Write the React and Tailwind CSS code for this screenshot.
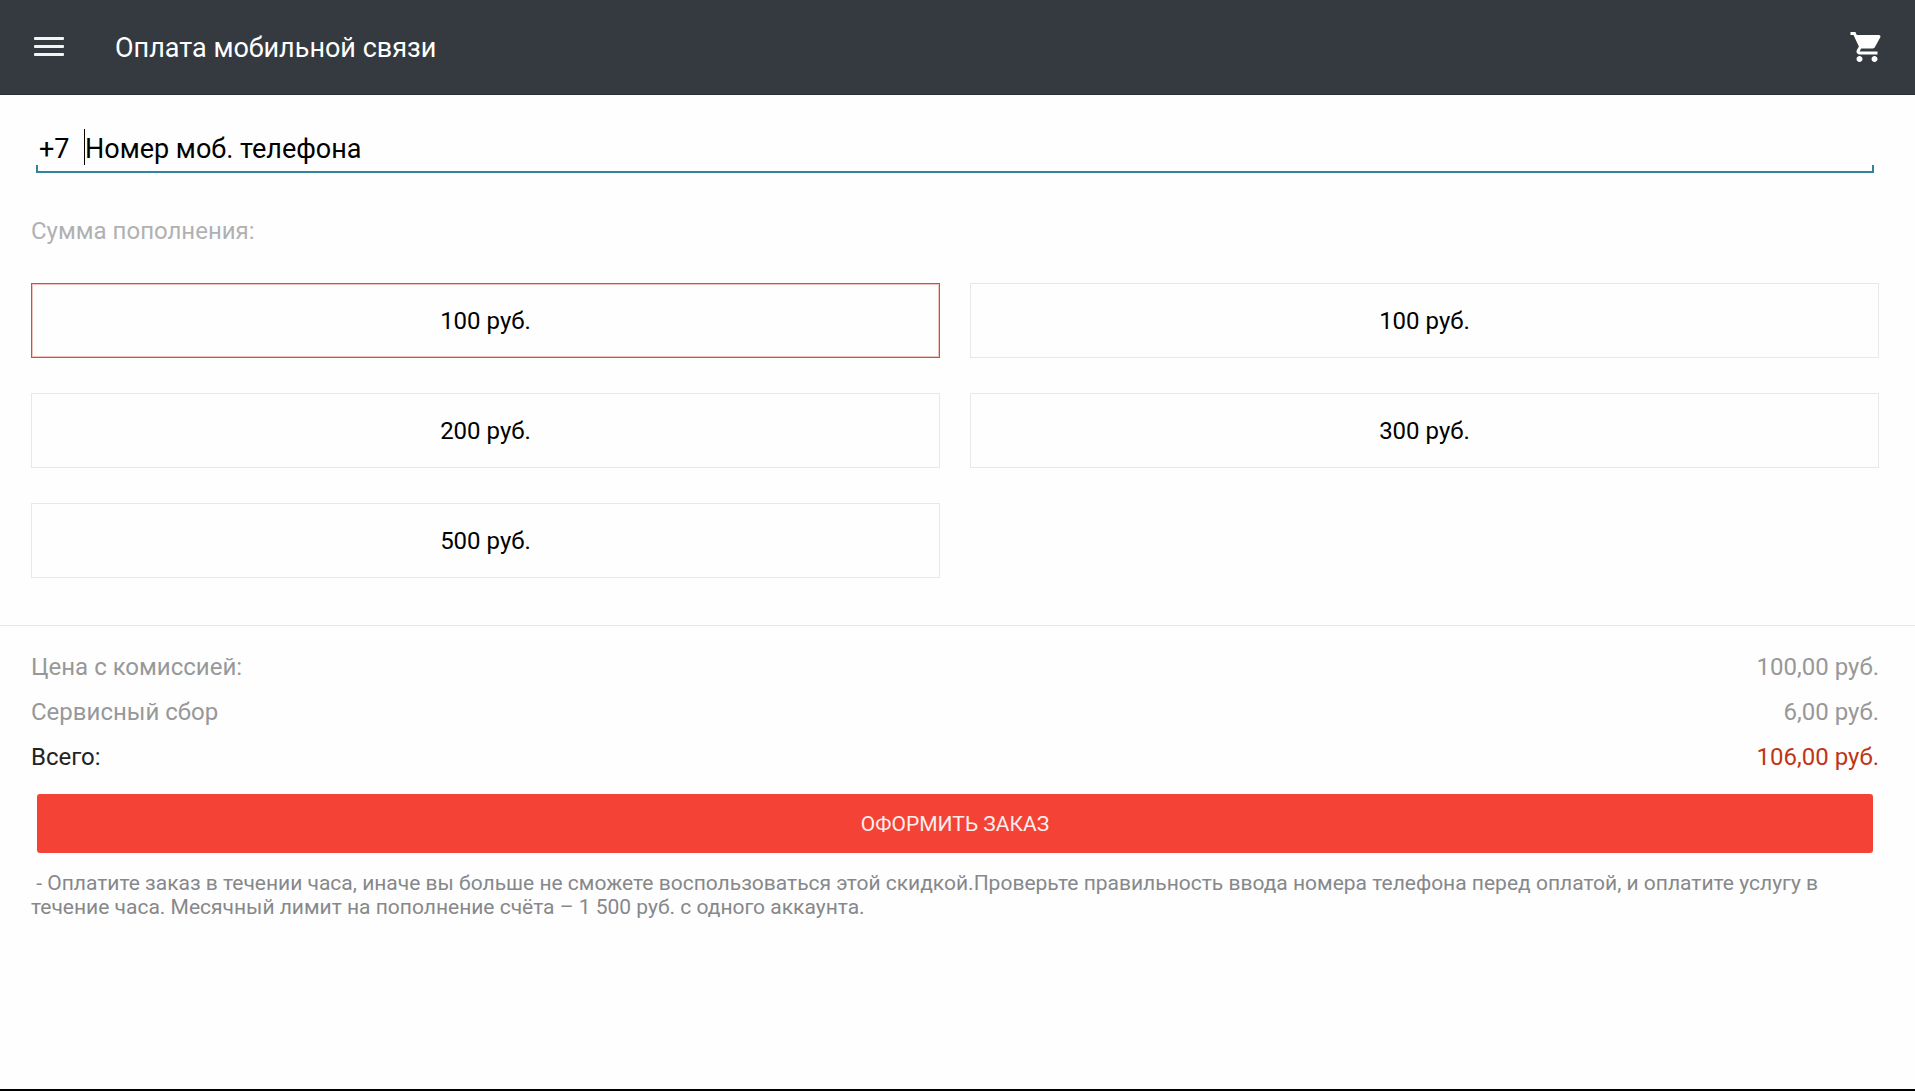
import React, { useState } from 'react';
import { MdShoppingCart } from 'react-icons/md';

const amounts = [
  { id: 1, label: '100 руб.' },
  { id: 2, label: '100 руб.' },
  { id: 3, label: '200 руб.' },
  { id: 4, label: '300 руб.' },
  { id: 5, label: '500 руб.' },
];

const MenuIcon = () => (
  <svg width="30" height="20" viewBox="0 0 30 20" fill="#f4f4f4">
    <rect x="0" y="0" width="30" height="3" rx="1" />
    <rect x="0" y="8" width="30" height="3" rx="1" />
    <rect x="0" y="16" width="30" height="3" rx="1" />
  </svg>
);

const Header = () => (
  <header className="flex h-[95px] items-center border-b border-[#2b3035] bg-[#343a40] pl-[34px] pr-[30px] text-white">
    <button type="button" aria-label="Меню">
      <MenuIcon />
    </button>
    <h1 className="ml-[51px] pt-0.5 text-[27px] leading-8">Оплата мобильной связи</h1>
    <button type="button" aria-label="Корзина" className="ml-auto">
      <MdShoppingCart size={36} />
    </button>
  </header>
);

const PhoneField = () => {
  const [phone, setPhone] = useState('');

  return (
    <div className="mx-[5px]">
      <div className="flex h-9 items-center text-[27px] leading-8 text-black">
        <label htmlFor="phone" className="w-12 pl-[3px] pt-1">+7</label>
        <input
          id="phone"
          type="tel"
          value={phone}
          onChange={(e) => setPhone(e.target.value)}
          placeholder="Номер моб. телефона"
          className="h-9 min-w-0 flex-1 border-l border-black pt-1 outline-none placeholder:text-black"
        />
      </div>
      {/* Underline with the raised ends */}
      <div className="h-2 border-x-2 border-b-2 border-[#2f8499]" />
    </div>
  );
};

const PriceRow = ({ label, value, labelClass, valueClass }) => (
  <div className="flex h-[45px] items-center justify-between">
    <dt className={labelClass}>{label}</dt>
    <dd className={valueClass}>{value}</dd>
  </div>
);

const App = () => {
  const [selected, setSelected] = useState(1);

  return (
    <div className="flex min-h-screen flex-col border-b-2 border-black bg-[#fefefe] font-['Roboto',sans-serif] text-2xl">
      <Header />

      <main className="flex-1">
        {/* Phone and amount */}
        <section className="border-b border-[#e6e7e8] pb-[47px] pl-[31px] pr-9 pt-[34px]">
          <PhoneField />
          <h2 className="mt-[42px] leading-8 text-[#b0b1b2]">Сумма пополнения:</h2>
          <div className="mt-9 grid grid-cols-2 gap-x-[30px] gap-y-[35px]">
            {amounts.map((amount) => (
              <button
                key={amount.id}
                type="button"
                aria-pressed={selected === amount.id}
                onClick={() => setSelected(amount.id)}
                className={`h-[75px] border text-black ${
                  selected === amount.id
                    ? 'border-[#bd5450] shadow-[inset_0_0_0_1px_#f3c3be]'
                    : 'border-[#e6e8e9]'
                }`}
              >
                {amount.label}
              </button>
            ))}
          </div>
        </section>

        {/* Total and checkout */}
        <section className="pl-[31px] pr-9 pt-[18px]">
          <dl>
            <PriceRow label="Цена с комиссией:" value="100,00 руб." labelClass="text-[#979899]" valueClass="text-[#979899]" />
            <PriceRow label="Сервисный сбор" value="6,00 руб." labelClass="text-[#979899]" valueClass="text-[#979899]" />
            <PriceRow label="Всего:" value="106,00 руб." labelClass="text-[#222324]" valueClass="text-[#bf3614]" />
          </dl>
          <div className="mx-[6px] mt-[15px]">
            <button type="button" className="block h-[59px] w-full rounded-[3px] bg-[#f44336] text-[21px] text-[#fdeeec]">
              ОФОРМИТЬ ЗАКАЗ
            </button>
          </div>
          <p className="mt-[18px] whitespace-pre-wrap text-[21px] leading-6 text-[#86888b]">
            {' - Оплатите заказ в течении часа, иначе вы больше не сможете воспользоваться этой скидкой.Проверьте правильность ввода номера телефона перед оплатой, и оплатите услугу в течение часа. Месячный лимит на пополнение счёта – 1 500 руб. с одного аккаунта.'}
          </p>
        </section>
      </main>
    </div>
  );
};

export default App;
